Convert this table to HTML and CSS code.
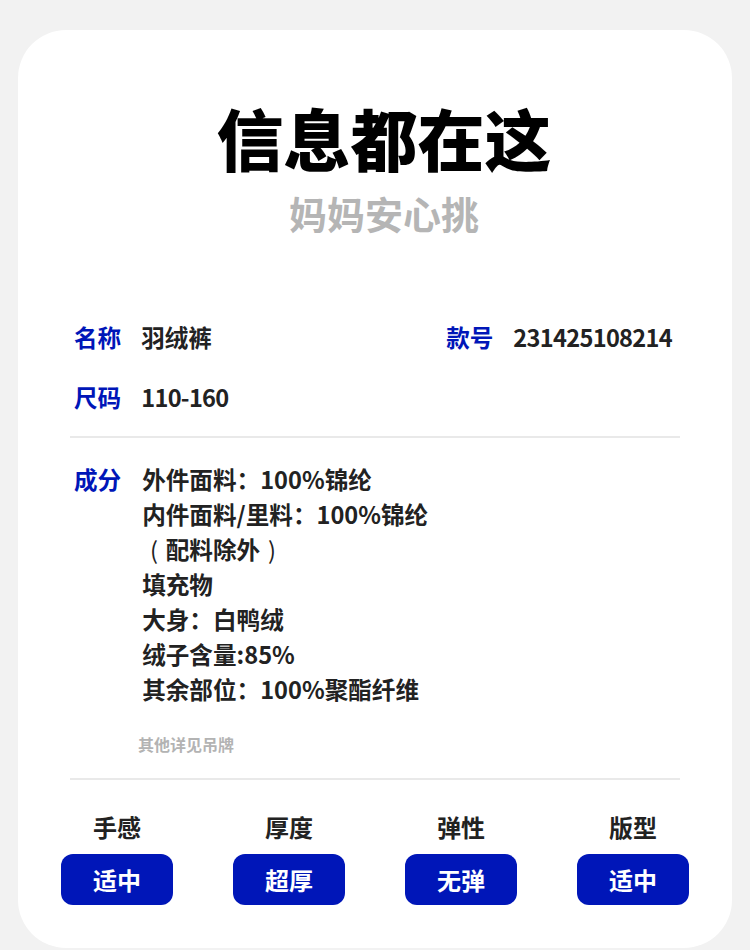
FILE: index.html
```html
<!DOCTYPE html>
<html lang="zh">
<head>
  <meta charset="UTF-8">
  <title>信息都在这</title>
  <meta name="viewport" content="width=device-width, initial-scale=1.0">
  <link rel="stylesheet" href="styles.css">
</head>
<body>

  <div class="card">
    <header class="head">
      <h1 class="title">信息都在这</h1>
      <div class="subtitle">妈妈安心挑</div>
    </header>

    <section class="info">
      <div class="row">
        <div class="pair">
          <span class="label">名称</span>
          <span class="value">羽绒裤</span>
        </div>
        <div class="pair">
          <span class="label">款号</span>
          <span class="value num">231425108214</span>
        </div>
      </div>
      <div class="row">
        <div class="pair">
          <span class="label">尺码</span>
          <span class="value num">110-160</span>
        </div>
      </div>
    </section>

    <hr class="divider">

    <section class="material">
      <div class="pair top">
        <span class="label">成分</span>
        <div class="value lines">
          <div>外件面料：100%锦纶</div>
          <div>内件面料/里料：100%锦纶</div>
          <div><span class="paren">(</span>配料除外<span class="paren">)</span></div>
          <div>填充物</div>
          <div>大身：白鸭绒</div>
          <div>绒子含量:85%</div>
          <div>其余部位：100%聚酯纤维</div>
        </div>
      </div>
      <div class="note">其他详见吊牌</div>
    </section>

    <hr class="divider">

    <section class="attrs">
      <div class="attr">
        <div class="attr-name">手感</div>
        <div class="tag">适中</div>
      </div>
      <div class="attr">
        <div class="attr-name">厚度</div>
        <div class="tag">超厚</div>
      </div>
      <div class="attr">
        <div class="attr-name">弹性</div>
        <div class="tag">无弹</div>
      </div>
      <div class="attr">
        <div class="attr-name">版型</div>
        <div class="tag">适中</div>
      </div>
    </section>
  </div>

</body>
</html>
```

FILE: styles.css
```css
/* Grundlayout */
body {
  margin: 0;
  background: #f2f2f2;
  font-family: "Noto Sans CJK SC", "Noto Sans", sans-serif;
  color: #222;
}
.card {
  margin: 30px 18px 0;
  height: 918px;
  box-sizing: border-box;
  background: #fff;
  border-radius: 48px;
  padding: 67px 52px 0;
}
/* Kopf */
.head {
  text-align: center;
  padding-left: 18px;
}
.title {
  margin: 0;
  font-size: 67px;
  line-height: 80px;
  font-weight: 900;
  color: #000;
}
.subtitle {
  margin-top: 11px;
  font-size: 38px;
  line-height: 50px;
  font-weight: 700;
  color: #b5b5b5;
}
/* Infozeilen */
.info {
  margin-top: 81px;
  padding: 0 8px 0 4px;
  display: flex;
  flex-direction: column;
  gap: 24px;
}
.row {
  display: flex;
  justify-content: space-between;
}
.pair {
  display: flex;
  gap: 20px;
  font-size: 23.6px;
  line-height: 36px;
  font-weight: 700;
}
.pair .label {
  color: #0016b8;
}
.num {
  letter-spacing: -0.7px;
}
.divider {
  margin: 21px 0 0;
  border: none;
  border-top: 2px solid #e9e9e9;
}
/* Material */
.material {
  padding: 24px 4px 0;
}
.pair.top {
  gap: 21px;
  line-height: 35px;
}
.lines {
  display: flex;
  flex-direction: column;
}
/* Klammern mittig in voller Breite */
.paren {
  display: inline-block;
  width: 1em;
  text-align: center;
  font-weight: 400;
}
.note {
  margin: 25px 0 0 64px;
  font-size: 16px;
  line-height: 24px;
  font-weight: 700;
  color: #b3b3b3;
}
.material + .divider {
  margin-top: 22px;
}
/* Eigenschaften */
.attrs {
  margin: 32px -52px 0;
  display: grid;
  grid-template-columns: repeat(4, 172px);
  justify-content: center;
}
.attr {
  display: flex;
  flex-direction: column;
  align-items: center;
  gap: 12px;
}
.attr-name {
  font-size: 24px;
  line-height: 30px;
  font-weight: 700;
  color: #222;
}
.tag {
  width: 112px;
  height: 51px;
  border-radius: 12px;
  background: #0016b8;
  color: #fff;
  font-size: 24px;
  font-weight: 700;
  display: flex;
  align-items: center;
  justify-content: center;
}
```
